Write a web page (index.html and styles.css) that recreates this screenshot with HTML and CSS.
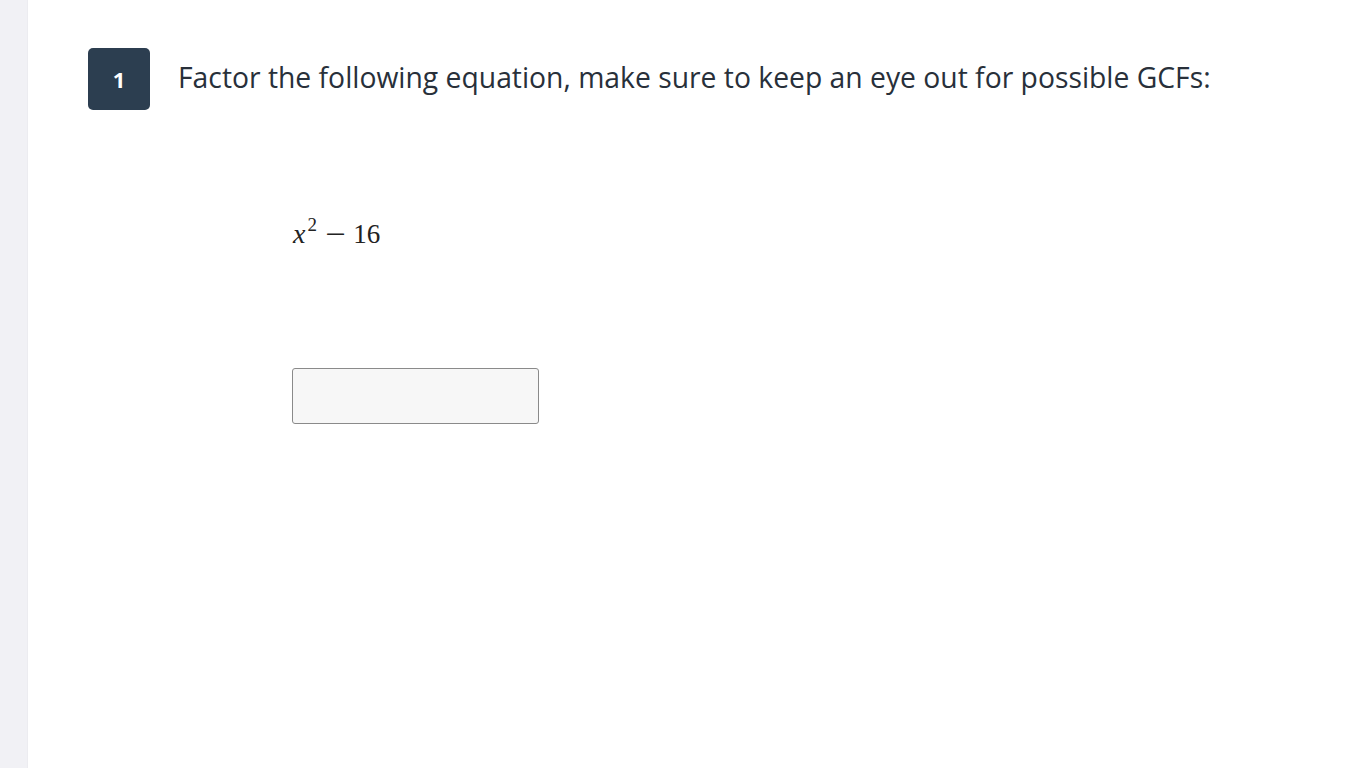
FILE: index.html
```html
<!DOCTYPE html>
<html>
<head>
<meta charset="utf-8">
<link rel="stylesheet" href="styles.css">
</head>
<body>
<div class="layout">
  <aside class="rail"></aside>
  <main class="content">
    <div class="question">
      <div class="badge">1</div>
      <h1 class="prompt">Factor the following equation, make sure to keep an eye out for possible GCFs:</h1>
    </div>
    <div class="body">
      <div class="math"><span class="var">x</span><sup class="exp">2</sup><span class="op">−</span><span class="num">16</span></div>
      <div class="answer"><input class="field" type="text"></div>
    </div>
  </main>
</div>
</body>
</html>
```

FILE: styles.css
```css
html, body {
  margin: 0;
  padding: 0;
  height: 100%;
  background: #ffffff;
  font-family: "Open Sans", "Noto Sans", sans-serif;
  color: #2b3440;
}
.layout {
  display: flex;
  height: 100%;
}
.rail {
  width: 27px;
  flex: none;
  background: #f1f1f5;
  border-right: 1px solid #ececf0;
}
.content {
  flex: 1;
  padding: 48px 0 0 60px;
}
.question {
  display: flex;
  align-items: flex-start;
  gap: 28px;
}
.badge {
  width: 62px;
  height: 62px;
  flex: none;
  border-radius: 5px;
  background: #2c3e50;
  color: #ffffff;
  font-weight: 700;
  font-size: 22px;
  display: flex;
  align-items: center;
  justify-content: center;
}
.prompt {
  margin: 8px 0 0 0;
  font-weight: 400;
  font-size: 28.3px;
  line-height: 42px;
  color: #28303a;
}
.body {
  padding-left: 204px;
}
.math {
  margin-top: 107px;
  font-family: "Liberation Serif", serif;
  color: #222;
  line-height: 34px;
  height: 34px;
  font-size: 27px;
}
.var {
  font-style: italic;
  font-size: 28px;
  margin-left: 1px;
}
.exp {
  font-size: 19px;
  vertical-align: 12px;
  line-height: 0;
  margin-left: 2px;
}
.op {
  display: inline-block;
  transform: scaleX(1.35);
  margin: 0 10px 0 11px;
}
.answer {
  margin-top: 117px;
}
.field {
  display: block;
  box-sizing: border-box;
  width: 247px;
  height: 56px;
  margin: 0;
  border: 1px solid #8a8a8a;
  border-radius: 3px;
  background: #f7f7f7;
  outline: none;
}
```
